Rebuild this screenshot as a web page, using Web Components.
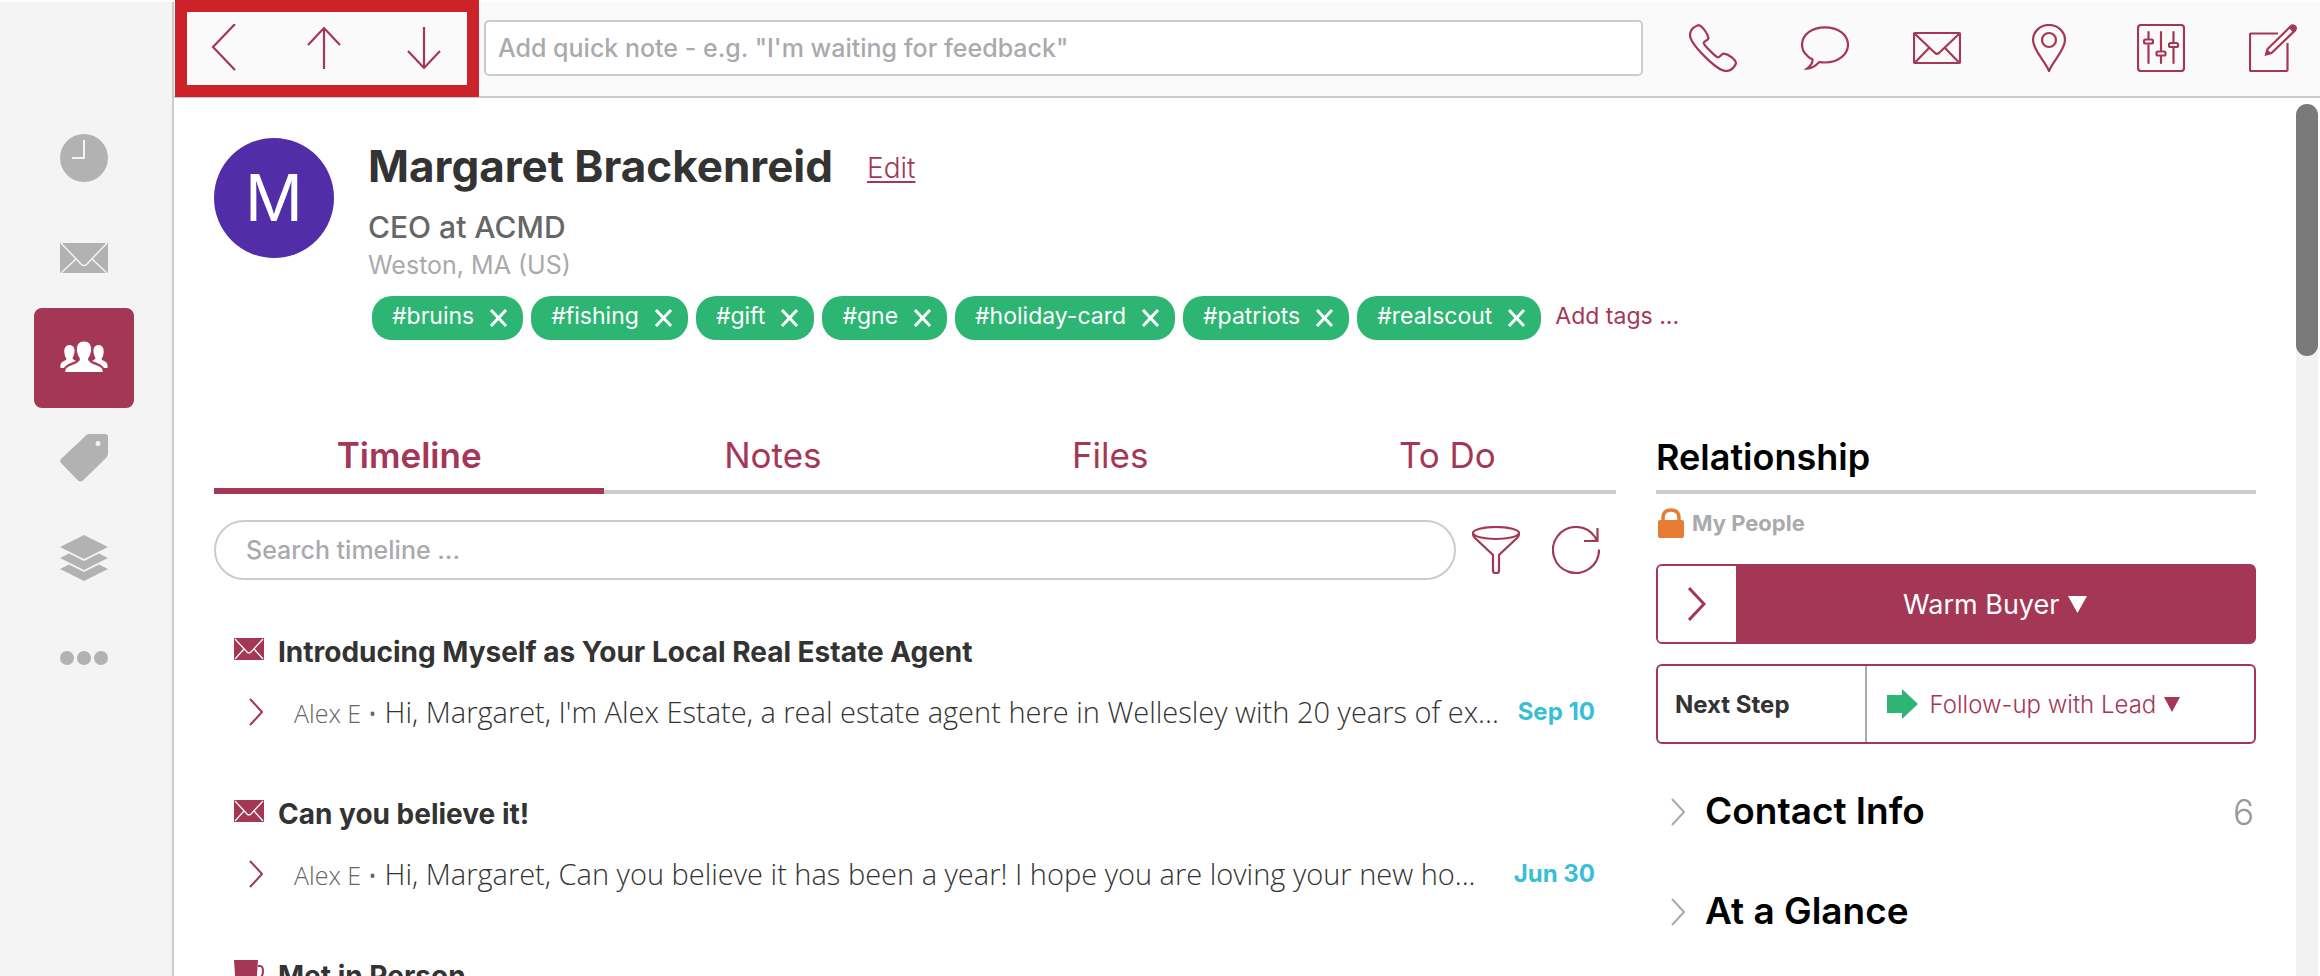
<!DOCTYPE html>
<html lang="en">
<head>
    <meta charset="UTF-8">
    <meta name="viewport" content="width=device-width, initial-scale=1.0">
    <title>Margaret Brackenreid</title>
    <style>
      body {
        margin: 0;
        font-family: Inter, "Liberation Sans", sans-serif;
        font-variation-settings: "opsz" 32;
        color: #333;
        background: #fff;
        --accent: #a53756;
        --line: #ccc;
        --muted: #aaa;
      }
    </style>
</head>
<body>
    <crm-app>
        <side-nav slot="nav"></side-nav>
        <top-bar slot="bar"></top-bar>
        <contact-header name="Margaret Brackenreid" initial="M">
            <span slot="job">CEO at ACMD</span>
            <span slot="place">Weston, MA (US)</span>
            <tag-pill>#bruins</tag-pill>
            <tag-pill>#fishing</tag-pill>
            <tag-pill>#gift</tag-pill>
            <tag-pill>#gne</tag-pill>
            <tag-pill>#holiday-card</tag-pill>
            <tag-pill>#patriots</tag-pill>
            <tag-pill>#realscout</tag-pill>
        </contact-header>
        <time-line slot="left">
            <timeline-entry icon="mail-solid" author="Alex E" date="Sep 10">
                <span slot="title">Introducing Myself as Your Local Real Estate Agent</span>
                Hi, Margaret, I'm Alex Estate, a real estate agent here in Wellesley with 20 years of ex...
            </timeline-entry>
            <timeline-entry icon="mail-solid" author="Alex E" date="Jun 30">
                <span slot="title">Can you believe it!</span>
                Hi, Margaret, Can you believe it has been a year! I hope you are loving your new ho...
            </timeline-entry>
            <timeline-entry icon="cup">
                <span slot="title">Met in Person</span>
            </timeline-entry>
        </time-line>
        <relation-panel slot="right">
            <panel-section count="6">Contact Info</panel-section>
            <panel-section>At a Glance</panel-section>
        </relation-panel>
    </crm-app>

    <template id="crm-app-template">
      <style>
        :host {
          display: flex;
          height: 100vh;
          box-sizing: border-box;
          padding-top: 2px;
          overflow: hidden;
        }

        .main {
          flex: 1;
          min-width: 0;
          display: flex;
          flex-direction: column;
        }

        .body {
          flex: 1;
          min-height: 0;
          display: flex;
        }

        .content {
          flex: 1;
          min-width: 0;
          padding: 40px 40px 0;
        }

        .columns {
          display: grid;
          grid-template-columns: minmax(0, 701fr) minmax(0, 300fr);
          gap: 40px;
          margin-top: 76px;
        }

        .scroll {
          width: 22px;
          margin: 6px 2px 0 0;
          border-radius: 11px 11px 0 0;
          background: #f2f2f2;
        }

        .thumb {
          height: 252px;
          border-radius: 11px;
          background: #7a7a7a;
        }
      </style>
      <slot name="nav"></slot>
      <div class="main">
        <slot name="bar"></slot>
        <div class="body">
          <main class="content">
            <slot></slot>
            <div class="columns">
              <slot name="left"></slot>
              <slot name="right"></slot>
            </div>
          </main>
          <div class="scroll"><div class="thumb"></div></div>
        </div>
      </div>
    </template>

    <template id="side-nav-template">
      <style>
        :host {
          display: block;
          width: 172px;
          border-right: 2px solid var(--line);
          background: #f4f4f4;
        }

        nav {
          display: flex;
          flex-direction: column;
          align-items: center;
          padding: 106px 4px 0 0;
        }

        button {
          width: 100px;
          height: 100px;
          display: flex;
          align-items: center;
          justify-content: center;
          padding: 0;
          border: 0;
          border-radius: 8px;
          background: none;
          color: #b2b2b2;
        }

        .active {
          background: var(--accent);
          color: #fff;
        }
      </style>
      <nav>
        <button aria-label="Recent"><crm-icon name="clock"></crm-icon></button>
        <button aria-label="Mail"><crm-icon name="mail-solid"></crm-icon></button>
        <button class="active" aria-label="People"><crm-icon name="people"></crm-icon></button>
        <button aria-label="Tags"><crm-icon name="tag"></crm-icon></button>
        <button aria-label="Groups"><crm-icon name="layers"></crm-icon></button>
        <button aria-label="More"><crm-icon name="dots"></crm-icon></button>
      </nav>
    </template>

    <template id="top-bar-template">
      <style>
        :host {
          display: flex;
          align-items: center;
          height: 92px;
          padding: 0 23px 2px 0;
          border-bottom: 2px solid var(--line);
          background: #fafafa;
          color: var(--accent);
        }

        button {
          display: flex;
          align-items: center;
          justify-content: center;
          padding: 0;
          border: 0;
          background: none;
          color: inherit;
        }

        .moves {
          position: relative;
          display: flex;
          height: 100%;
        }

        .moves button {
          width: 100px;
        }

        /* red frame drawn over the three navigation arrows */
        .frame {
          position: absolute;
          inset: -2px -5px -3px 1px;
          border: 12px solid #cc232a;
          pointer-events: none;
        }

        input {
          flex: 1;
          min-width: 0;
          height: 56px;
          box-sizing: border-box;
          margin: 0 46px 0 10px;
          padding: 0 12px;
          border: 2px solid var(--line);
          border-radius: 5px;
          background: #fff;
          font: inherit;
          font-size: 25px;
          font-weight: 500;
        }

        input::placeholder {
          color: #aaaaae;
        }

        .actions {
          display: flex;
          gap: 64px;
        }
      </style>
      <div class="moves">
        <button aria-label="Back"><crm-icon name="back"></crm-icon></button>
        <button aria-label="Previous"><crm-icon name="up"></crm-icon></button>
        <button aria-label="Next"><crm-icon name="down"></crm-icon></button>
        <div class="frame"></div>
      </div>
      <input type="text" aria-label="Quick note" placeholder="Add quick note - e.g. &quot;I'm waiting for feedback&quot;">
      <div class="actions">
        <button aria-label="Call"><crm-icon name="phone"></crm-icon></button>
        <button aria-label="Message"><crm-icon name="chat"></crm-icon></button>
        <button aria-label="Email"><crm-icon name="mail"></crm-icon></button>
        <button aria-label="Location"><crm-icon name="pin"></crm-icon></button>
        <button aria-label="Settings"><crm-icon name="sliders"></crm-icon></button>
        <button aria-label="Compose"><crm-icon name="compose"></crm-icon></button>
      </div>
    </template>

    <template id="contact-header-template">
      <style>
        :host {
          display: flex;
          align-items: flex-start;
          gap: 34px;
        }

        .avatar {
          flex: none;
          width: 120px;
          height: 120px;
          border-radius: 50%;
          background: #512da8;
          color: #fff;
          font-size: 64px;
          line-height: 120px;
          text-align: center;
        }

        .top {
          display: flex;
          align-items: center;
          gap: 34px;
        }

        h1 {
          margin: 0;
          font-size: 44px;
          line-height: 56px;
          font-weight: 700;
        }

        a {
          color: var(--accent);
        }

        .edit {
          padding-top: 4px;
          font-size: 28px;
          font-weight: 300;
          text-decoration-thickness: 2px;
          text-underline-offset: 3px;
        }

        .job {
          margin-top: 12px;
          font-size: 30px;
          line-height: 42px;
          font-weight: 500;
          color: #666;
        }

        .place {
          font-size: 25px;
          line-height: 34px;
          color: var(--muted);
        }

        .tags {
          display: flex;
          align-items: center;
          gap: 8px;
          margin: 14px 0 0 4px;
          font-size: 23px;
          line-height: 40px;
        }

        .add {
          padding: 0 0 4px 6px;
          text-decoration: none;
        }
      </style>
      <div class="avatar"></div>
      <div>
        <div class="top"><h1></h1><a class="edit" href="#edit">Edit</a></div>
        <div class="job"><slot name="job"></slot></div>
        <div class="place"><slot name="place"></slot></div>
        <div class="tags"><slot></slot><a class="add" href="#tags">Add tags ...</a></div>
      </div>
    </template>

    <template id="tag-pill-template">
      <style>
        :host {
          display: flex;
          align-items: center;
          gap: 15px;
          height: 44px;
          box-sizing: border-box;
          padding: 0 15px 0 20px;
          border-radius: 20px;
          background: #2db573;
          color: #fff;
        }

        span {
          padding-bottom: 4px;
        }

        button {
          display: flex;
          padding: 0;
          border: 0;
          background: none;
          color: inherit;
        }
      </style>
      <span><slot></slot></span>
      <button aria-label="Remove tag"><crm-icon name="close"></crm-icon></button>
    </template>

    <template id="time-line-template">
      <style>
        :host {
          display: block;
          color: var(--accent);
        }

        .tabs {
          display: grid;
          grid-template-columns: 390fr 337fr 337fr 337fr;
        }

        .tabs button {
          height: 78px;
          padding: 0;
          border: 0;
          background: none;
          box-shadow: inset 0 -4px var(--line);
          color: inherit;
          font: inherit;
          font-size: 35px;
        }

        .tabs .active {
          box-shadow: inset 0 -6px var(--accent);
          font-weight: 600;
        }

        .search {
          display: flex;
          align-items: center;
          margin: 26px 16px 52px 0;
        }

        input {
          flex: 1;
          min-width: 0;
          height: 60px;
          box-sizing: border-box;
          padding: 0 30px;
          border: 2px solid var(--line);
          border-radius: 30px;
          font: inherit;
          font-size: 25px;
          font-weight: 500;
        }

        input::placeholder {
          color: #aaaaae;
        }

        .search button {
          display: flex;
          margin-left: 16px;
          padding: 0;
          border: 0;
          background: none;
          color: inherit;
        }

        .search button + button {
          margin-left: 32px;
        }

        .list {
          display: flex;
          flex-direction: column;
          gap: 62px;
        }
      </style>
      <div class="tabs" role="tablist">
        <button class="active" role="tab" aria-selected="true">Timeline</button>
        <button role="tab">Notes</button>
        <button role="tab">Files</button>
        <button role="tab">To Do</button>
      </div>
      <div class="search">
        <input type="text" aria-label="Search timeline" placeholder="Search timeline ...">
        <button aria-label="Filter"><crm-icon name="funnel"></crm-icon></button>
        <button aria-label="Refresh"><crm-icon name="refresh"></crm-icon></button>
      </div>
      <div class="list"><slot></slot></div>
    </template>

    <template id="timeline-entry-template">
      <style>
        :host {
          display: block;
          color: #333;
          font-size: 28px;
          line-height: 40px;
        }

        .title {
          display: flex;
          align-items: center;
          gap: 14px;
          padding-left: 20px;
          font-weight: 700;
        }

        .title crm-icon {
          height: 30px;
          margin-bottom: 6px;
        }

        crm-icon {
          color: var(--accent);
        }

        .message {
          display: flex;
          align-items: center;
          height: 40px;
          margin-top: 20px;
          padding: 0 21px 0 35px;
          white-space: nowrap;
        }

        button {
          display: flex;
          padding: 0;
          border: 0;
          background: none;
        }

        p {
          flex: 1;
          min-width: 0;
          margin: 0 0 0 31px;
          font-family: "Open Sans", Inter, sans-serif;
          font-size: 29px;
          font-weight: 300;
        }

        .author {
          font-size: 25px;
          color: #666;
        }

        time {
          font-size: 24px;
          font-weight: 700;
          color: #39bfd3;
        }
      </style>
      <div class="title"><crm-icon></crm-icon><slot name="title"></slot></div>
      <div class="message">
        <button aria-label="Expand"><crm-icon name="chevron"></crm-icon></button>
        <p><span class="author"></span> <slot></slot></p>
        <time></time>
      </div>
    </template>

    <template id="relation-panel-template">
      <style>
        :host {
          display: block;
        }

        h2 {
          height: 78px;
          box-sizing: border-box;
          margin: 0;
          padding-top: 4px;
          box-shadow: inset 0 -4px var(--line);
          color: #000;
          font-size: 36px;
          line-height: 74px;
          font-weight: 600;
        }

        .owner {
          display: flex;
          align-items: center;
          gap: 8px;
          margin: 14px 0 26px 2px;
          font-size: 22px;
          line-height: 30px;
          font-weight: 700;
          color: #aaaaae;
        }

        .owner crm-icon {
          color: #e77c35;
        }

        .box {
          display: flex;
          height: 80px;
          box-sizing: border-box;
          margin-bottom: 20px;
          border: 2px solid var(--accent);
          border-radius: 6px;
          color: var(--accent);
        }

        .box > * {
          display: flex;
          align-items: center;
        }

        .box button {
          width: 78px;
          justify-content: center;
          padding: 0;
          border: 0;
          border-radius: 4px 0 0 4px;
          background: #fff;
          color: inherit;
        }

        select {
          appearance: none;
          padding: 0;
          border: 0;
          background: none;
          color: inherit;
          font: inherit;
        }

        .stage {
          flex: 1;
          justify-content: center;
          gap: 8px;
          background: var(--accent);
          color: #fff;
          font-size: 27px;
        }

        .label {
          width: 35%;
          box-sizing: border-box;
          padding-left: 17px;
          border-right: 2px solid var(--muted);
          color: #333;
          font-size: 24px;
          font-weight: 700;
        }

        .step {
          flex: 1;
          gap: 7px;
          padding-left: 20px;
          font-size: 24px;
          font-weight: 300;
        }

        .step .arrow {
          margin-right: 5px;
          color: #2db573;
        }

        .sections {
          margin-top: -2px;
        }
      </style>
      <h2>Relationship</h2>
      <div class="owner"><crm-icon name="lock"></crm-icon>My People</div>
      <div class="box">
        <button aria-label="Next stage"><crm-icon name="chevron-big"></crm-icon></button>
        <div class="stage">
          <select aria-label="Stage"><option>Warm Buyer</option></select>
          <crm-icon name="triangle"></crm-icon>
        </div>
      </div>
      <div class="box">
        <label class="label" for="step">Next Step</label>
        <div class="step">
          <crm-icon class="arrow" name="arrow"></crm-icon>
          <select id="step"><option>Follow-up with Lead</option></select>
          <crm-icon name="triangle-small"></crm-icon>
        </div>
      </div>
      <div class="sections"><slot></slot></div>
    </template>

    <template id="panel-section-template">
      <style>
        :host {
          display: flex;
          align-items: center;
          gap: 20px;
          height: 100px;
          padding: 0 2px 0 15px;
        }

        button {
          display: flex;
          padding: 0;
          border: 0;
          background: none;
          color: var(--muted);
        }

        h3 {
          flex: 1;
          margin: 0;
          padding-bottom: 3px;
          color: #000;
          font-size: 37px;
          font-weight: 600;
        }

        .count {
          font-size: 35px;
          font-weight: 300;
          color: #999;
        }
      </style>
      <button aria-label="Expand section"><crm-icon name="chevron"></crm-icon></button>
      <h3><slot></slot></h3>
      <span class="count"></span>
    </template>

    <script>
      // name: [width, height, viewBox, markup]
      const line = 'fill="none" stroke="currentColor" stroke-width="2.2"';
      const ICONS = {
        'back': [48, 48, '0 0 48 48', `<path ${line} d="M35 0 13 23 35 46"/>`],
        'up': [48, 48, '0 0 48 48', `<path ${line} d="M24 45V4M8 21 24 4 40 21"/>`],
        'down': [48, 48, '0 0 48 48', `<path ${line} d="M24 3V44M8 27 24 44 40 27"/>`],
        'phone': [48, 48, '0 0 48 48', `<path ${line} d="M9 1.2C4 3 1 6.5 1 11C1 20 28 47 37 47C41.5 47 45 44 47 39.5C47 36 40 30 34.5 29.7C32 30 31 33.3 29 33.3C27 33.3 14.7 21 14.7 19C14.7 17 19.5 16.5 19.5 14C18.5 9 12.5 1 9 1.2Z"/>`],
        'chat': [48, 48, '0 0 48 48', `<path ${line} d="M11.5 35.5C5 32 1 26.5 1 20.7C1 10.5 11.3 3.3 24 3.3S47 10.5 47 20.7S36.7 38.5 24 38.5C22 38.5 20 38.4 18.3 38C15 41.5 11 44.5 6 44.6C9 42.5 11.8 39.5 11.5 35.5Z"/>`],
        'mail': [48, 48, '0 0 48 48', `<g ${line}><rect x="1" y="9" width="46" height="30" rx="1"/><path d="M1.5 9.5 22 29Q24 30.5 26 29L46.5 9.5M2 38.5 16 24M46 38.5 32 24"/></g>`],
        'pin': [48, 48, '0 0 48 48', `<g ${line}><path d="M24 47C20 37 8 26 8 16A16 15 0 0 1 40 16C40 26 28 37 24 47Z"/><circle cx="24" cy="16" r="7"/></g>`],
        'sliders': [48, 48, '0 0 48 48', `<g ${line}><rect x="1" y="1" width="46" height="46" rx="3"/><path stroke-linecap="round" d="M11.5 8V15M11.5 21V39M24 8V27M24 32V39M36.5 8V19M36.5 24V39"/><rect x="7" y="15.5" width="9" height="4" rx="1.5"/><rect x="19.5" y="27.5" width="9" height="4" rx="1.5"/><rect x="32" y="19" width="9" height="4" rx="1.5"/></g>`],
        'compose': [48, 48, '0 0 48 48', `<g ${line}><path d="M29 9.5H2Q1 9.5 1 10.5V46Q1 47 2 47H37Q38.5 47 38.5 46V19"/><path d="M17 30.5 18.5 25 42 2Q44 .5 46 2.5Q47.5 4.5 46 6.5L22.5 29Z"/></g><path fill="currentColor" d="M40 4 43 1Q46 0 47.5 3Q48 5 46 7L44 8.5ZM16 31.5 18 25 22.5 29.5Z"/>`],
        'clock': [48, 48, '0 0 48 48', `<circle cx="24" cy="24" r="24" fill="currentColor"/><path d="M24 6V24H12" fill="none" stroke="#f4f4f4" stroke-width="2"/>`],
        'mail-solid': [48, 34, '0 0 48 34', `<rect y="2" width="48" height="30" fill="currentColor"/><path d="M1 2 21 23Q24 26 27 23L47 2M1 32 16 18M47 32 32 18" fill="none" stroke="#f4f4f4" stroke-width="1.5"/>`],
        'mail-small': [30, 30, '0 0 30 30', `<rect y="4" width="30" height="22" fill="currentColor"/><path d="M1 5 13 18Q15 20 17 18L29 5M1 25 10 15M29 25 20 15" fill="none" stroke="#fff" stroke-width="1.2"/>`],
        'people': [48, 48, '0 0 48 48', `<g fill="currentColor"><path d="M9.5 11C13 11 15 14 14.5 18C14.2 21 13 23 12.5 24.5C14 26 15 26.5 16 27C10 29 6.5 30.5 4 34H.5C0 30 1 28.5 3 27.5C5 26.5 6.5 26 6.5 24.5C5 23 4.5 20.5 4.3 18C4 14 6 11 9.5 11Z"/><path transform="matrix(-1 0 0 1 48 0)" d="M9.5 11C13 11 15 14 14.5 18C14.2 21 13 23 12.5 24.5C14 26 15 26.5 16 27C10 29 6.5 30.5 4 34H.5C0 30 1 28.5 3 27.5C5 26.5 6.5 26 6.5 24.5C5 23 4.5 20.5 4.3 18C4 14 6 11 9.5 11Z"/></g><path fill="currentColor" stroke="#a53756" stroke-width="1" d="M24 7C29 7 32 10.5 31.5 16.5C31.2 20 30 22.5 28.5 24.5C28.5 28 32 29 37 31C42 33 43.5 35 43 38.5H5C4.5 35 6 33 11 31C16 29 19.5 28 19.5 24.5C18 22.5 16.8 20 16.5 16.5C16 10.5 19 7 24 7Z"/>`],
        'tag': [48, 48, '0 0 48 48', `<path fill="currentColor" fill-rule="evenodd" d="M27 .5Q28 0 29 0H45Q48 0 48 3V19Q48 22 46 24L23 46.5Q20.5 48.5 18 46.5L1 29Q-.5 27 1 25ZM38 7A2.5 2.5 0 1 0 38 12A2.5 2.5 0 1 0 38 7Z"/>`],
        'layers': [48, 46, '0 0 48 46', `<g fill="currentColor"><path d="M24 0 48 12 24 24 0 12Z"/><path d="M9 18.5 24 26 39 18.5 48 23 24 35 0 23Z"/><path d="M9 29.5 24 37 39 29.5 48 34 24 46 0 34Z"/></g>`],
        'dots': [48, 14, '0 0 48 14', `<g fill="currentColor"><circle cx="7" cy="7" r="7"/><circle cx="24" cy="7" r="7"/><circle cx="41" cy="7" r="7"/></g>`],
        'close': [19, 20, '0 0 19 20', `<path d="M2 2 17 18M17 2 2 18" fill="none" stroke="currentColor" stroke-width="3"/>`],
        'funnel': [48, 48, '0 0 48 48', `<g ${line}><ellipse cx="24" cy="7" rx="23" ry="6"/><path d="M1 8Q1 10 3 12L21 29V45Q21 47 24 47T27 45V29L45 12Q47 10 47 8"/></g>`],
        'refresh': [48, 48, '0 0 48 48', `<path ${line} d="M47 23.5A23 23 0 1 1 43 11L45 15M45.5 2V15H32"/>`],
        'cup': [30, 30, '0 0 30 30', `<path fill="currentColor" d="M0 2H24L22.5 24Q22 27 19 27H5Q2 27 1.5 24Z"/><path fill="none" stroke="currentColor" stroke-width="2" d="M24 8H26Q29 8 29 13Q29 20 23 21"/>`],
        'chevron': [14, 28, '0 0 14 28', `<path d="M1 1 13 14 1 27" fill="none" stroke="currentColor" stroke-width="2"/>`],
        'chevron-big': [18, 34, '0 0 18 34', `<path d="M1 1 16 17 1 33" fill="none" stroke="currentColor" stroke-width="3"/>`],
        'lock': [26, 30, '0 0 26 30', `<rect y="12" width="26" height="18" rx="2" fill="currentColor"/><path d="M5 14V10Q5 2 13 2T21 10V14" fill="none" stroke="currentColor" stroke-width="3.5"/>`],
        'triangle': [19, 17, '0 0 19 17', `<path fill="currentColor" d="M0 0H19L9.5 17Z"/>`],
        'triangle-small': [16, 15, '0 0 16 15', `<path fill="currentColor" d="M0 0H16L8 15Z"/>`],
        'arrow': [31, 30, '0 0 31 30', `<path fill="currentColor" d="M0 6H15V0L31 15 15 30V24H0Z"/>`]
      };

      class CrmElement extends HTMLElement {
        constructor() {
          super();
          const template = document.getElementById(this.localName + '-template').content;
          this.attachShadow({ mode: 'open' }).appendChild(template.cloneNode(true));
        }

        find(selector) {
          return this.shadowRoot.querySelector(selector);
        }
      }

      class CrmIcon extends HTMLElement {
        static observedAttributes = ['name'];

        constructor() {
          super();
          this.attachShadow({ mode: 'open' });
        }

        attributeChangedCallback() {
          const icon = ICONS[this.getAttribute('name')];
          if (!icon) return;
          const [width, height, box, markup] = icon;
          this.shadowRoot.innerHTML = `
            <style>:host { display: flex; align-items: center; flex: none; } svg { display: block; }</style>
            <svg width="${width}" height="${height}" viewBox="${box}" aria-hidden="true">${markup}</svg>`;
        }
      }

      class ContactHeader extends CrmElement {
        connectedCallback() {
          this.find('.avatar').textContent = this.getAttribute('initial');
          this.find('h1').textContent = this.getAttribute('name');
        }
      }

      class TimelineEntry extends CrmElement {
        connectedCallback() {
          this.find('.title crm-icon').setAttribute('name', this.getAttribute('icon').replace('solid', 'small'));
          if (!this.hasAttribute('author')) {
            this.find('.message').remove();
            return;
          }
          this.find('.author').textContent = `${this.getAttribute('author')} •`;
          this.find('time').textContent = this.getAttribute('date');
        }
      }

      class PanelSection extends CrmElement {
        connectedCallback() {
          this.find('.count').textContent = this.getAttribute('count') || '';
        }
      }

      customElements.define('crm-icon', CrmIcon);
      customElements.define('crm-app', class extends CrmElement {});
      customElements.define('side-nav', class extends CrmElement {});
      customElements.define('top-bar', class extends CrmElement {});
      customElements.define('contact-header', ContactHeader);
      customElements.define('tag-pill', class extends CrmElement {});
      customElements.define('time-line', class extends CrmElement {});
      customElements.define('timeline-entry', TimelineEntry);
      customElements.define('relation-panel', class extends CrmElement {});
      customElements.define('panel-section', PanelSection);
    </script>
</body>
</html>
